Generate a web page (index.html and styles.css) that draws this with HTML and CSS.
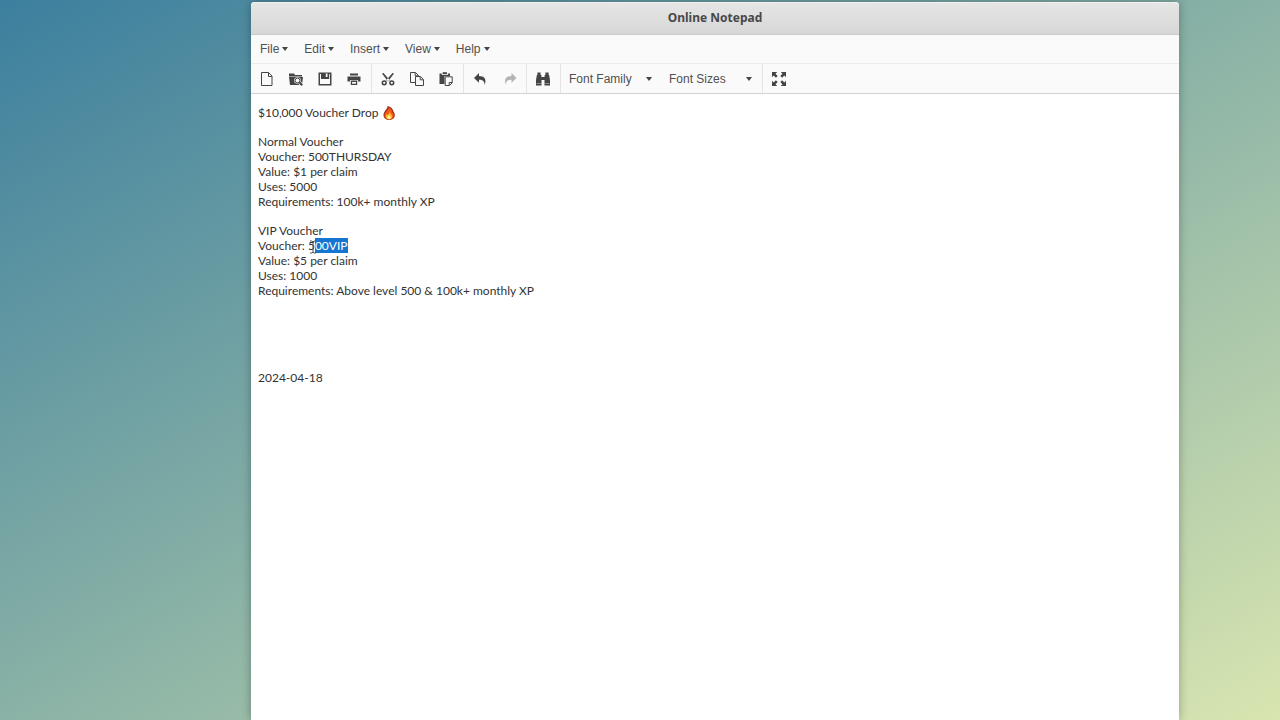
FILE: index.html
```html
<!DOCTYPE html>
<html lang="en">
<head>
<meta charset="utf-8">
<title>Online Notepad</title>
<link rel="stylesheet" href="styles.css">
</head>
<body>
<main class="window">
  <header class="titlebar"><h1 class="title">Online Notepad</h1></header>

  <nav class="menubar" aria-label="Menu">
    <button class="menu" type="button">File<span class="caret"></span></button>
    <button class="menu" type="button">Edit<span class="caret"></span></button>
    <button class="menu" type="button">Insert<span class="caret"></span></button>
    <button class="menu" type="button">View<span class="caret"></span></button>
    <button class="menu" type="button">Help<span class="caret"></span></button>
  </nav>

  <div class="toolbar" role="toolbar" aria-label="Editor tools">
    <div class="group">
      <button class="tool" type="button" aria-label="New document">
        <svg class="icon" viewBox="0 0 16 16"><path class="line" d="M2.500 1.500h7l3.500 3.500v9.500H2.500zM9.500 1.800v3.700h3.300"/></svg>
      </button>
      <button class="tool" type="button" aria-label="Open">
        <svg class="icon" viewBox="0 0 16 16"><path d="M1 2.500h5l1 1.500h7v1.500H1zM1 6h14l-1 8H2z"/><circle cx="9.500" cy="9.500" r="3.300" fill="#fafafa"/><path stroke="#fafafa" stroke-width="3.200" d="M11.500 11.500l2.800 2.800"/><circle class="line" cx="9.500" cy="9.500" r="2.400"/><path class="bold" d="M11.300 11.300l2.900 2.900"/></svg>
      </button>
      <button class="tool" type="button" aria-label="Save">
        <svg class="icon" viewBox="0 0 16 16"><path fill-rule="evenodd" d="M1.500 1.500h13v13h-13zM3 3v10h10V3h-.8v5H4V3z"/><path fill="#fafafa" d="M8.800 2.500h1.700v3.500H8.800z"/></svg>
      </button>
      <button class="tool" type="button" aria-label="Print">
        <svg class="icon" viewBox="0 0 16 16"><path d="M4 2.500h8v2H4zM1.500 5.500h13v5H12V9H4v1.500H1.500z"/><path d="M4.800 9.500h6.400V14H4.800z"/><path fill="#fafafa" d="M6 11h4v1.700H6z"/></svg>
      </button>
    </div>
    <div class="group">
      <button class="tool" type="button" aria-label="Cut">
        <svg class="icon" viewBox="0 0 16 16"><path d="M2 2.500l1.500-.5 6.300 7.200-1.800 1.400zM14 2.500l-1.500-.5-6.300 7.200 1.800 1.400z"/><circle class="cut" cx="4.200" cy="11.800" r="1.900"/><circle class="cut" cx="11.800" cy="11.800" r="1.900"/></svg>
      </button>
      <button class="tool" type="button" aria-label="Copy">
        <svg class="icon" viewBox="0 0 16 16"><path class="line" d="M6.500 11.500h-5v-10h5l3 3v1M6.200 1.700v3.100h3.100M6.500 5.500h5l3 3v6h-8zM11.200 5.700v3.100h3.100"/></svg>
      </button>
      <button class="tool" type="button" aria-label="Paste">
        <svg class="icon" viewBox="0 0 16 16"><path d="M1.500 2.500h2.300V4h6V2.500H12v2.600H6.500v8h-5z"/><path d="M4.700 1.200h4.200v2H4.700z"/><path class="line" fill="#fafafa" d="M7.200 5.800h7v6l-2.700 2.700H7.200zM14 11.500h-2.800v2.800"/></svg>
      </button>
    </div>
    <div class="group">
      <button class="tool" type="button" aria-label="Undo">
        <svg class="icon" viewBox="0 0 16 16"><path d="M7 2v3c5 0 8.200 3.200 5.500 9 .2-3.800-1.800-5.300-5.500-5.200v3L2 6.900z"/></svg>
      </button>
      <button class="tool" type="button" aria-label="Redo" disabled>
        <svg class="icon" viewBox="0 0 16 16"><path d="M10.500 2v3c-5 0-8.200 3.200-5.500 9-.2-3.800 1.800-5.300 5.500-5.200v3l5-4.900z"/></svg>
      </button>
    </div>
    <div class="group">
      <button class="tool" type="button" aria-label="Find and replace">
        <svg class="icon" viewBox="0 0 16 16"><path d="M2.400 1.500h3.200V4h.8v2h3.200V4h.8V1.500h3.200V4h.5l.9 5v5.500H9.500V9h-3v5.500H1V9l.9-5h.5z"/><path stroke="#fafafa" stroke-width=".4" d="M1.500 12.500h4.500M10 12.500h4.500"/></svg>
      </button>
    </div>
    <div class="group group-selects">
      <div class="picker">
        <select class="select" aria-label="Font family"><option>Font Family</option></select>
        <span class="caret picker-caret"></span>
      </div>
      <div class="picker">
        <select class="select" aria-label="Font size"><option>Font Sizes</option></select>
        <span class="caret picker-caret"></span>
      </div>
    </div>
    <div class="group">
      <button class="tool" type="button" aria-label="Fullscreen">
        <svg class="icon" viewBox="0 0 16 16"><path d="M1 1h5.200L4.500 2.700l2.200 2.200-1.800 1.800-2.200-2.200L1 6.200zM15 1v5.200l-1.700-1.700-2.200 2.200-1.800-1.800 2.200-2.200L9.800 1zM1 15V9.800l1.700 1.700 2.200-2.200 1.800 1.800-2.200 2.200L6.200 15zM15 15H9.800l1.700-1.700-2.200-2.200 1.800-1.800 2.200 2.200L15 9.800z"/></svg>
      </button>
    </div>
  </div>

  <div class="editor" role="textbox" aria-multiline="true" aria-label="Note" contenteditable="true" spellcheck="false">
    <p class="note">$10,000 Voucher Drop <svg class="flame" role="img" aria-label="fire" viewBox="0 0 14 14"><path fill="#a5301a" d="M5.500 0C9 .8 11 3 11.500 5.500 12.600 7 13 8.300 12.800 9.800 12.500 12.400 10.300 14 7.200 14S1.800 12.400 1.500 9.800C1.300 7.500 2.300 5.800 3.500 4.300 4.600 3 5.600 1.800 5.500 0z"/><path fill="#ee5a1c" d="M6.800 1.500c2.300 1.300 3.300 3 3.500 4.800 1.200 1.200 1.500 2.400 1.300 3.700-.3 2-2 3.300-4.400 3.300S2.900 12 2.600 10c-.2-1.900.6-3.200 1.700-4.500C5.600 4.200 6.800 3.200 6.800 1.500z"/><path fill="#ffb52b" d="M7.500 5.500c0 1.500 2.700 2.500 2.700 5 0 1.800-1.300 2.900-3.100 2.900s-3.300-1-3.300-2.800c0-1.300.6-2 1.200-2.600l.7.900C6.800 8.200 7.500 7 7.500 5.500z"/><path fill="#fff08a" d="M7.100 8.800c.2.900 1.600 1.300 1.600 2.700 0 1-.7 1.600-1.700 1.600s-1.700-.6-1.700-1.600c0-1.100 1.400-1.600 1.800-2.700z"/></svg></p>
    <p class="note">Normal Voucher<br>Voucher: 500THURSDAY<br>Value: $1 per claim<br>Uses: 5000<br>Requirements: 100k+ monthly XP</p>
    <p class="note">VIP Voucher<br>Voucher: 5<span class="selected"><svg class="cursor" aria-hidden="true" viewBox="0 0 8 14"><path d="M1 1h2l1 1 1-1h2M4 2v10M1 13h2l1-1 1 1h2"/></svg>00VIP</span><br>Value: $5 per claim<br>Uses: 1000<br>Requirements: Above level 500 &amp; 100k+ monthly XP</p>
    <p class="note date">2024-04-18</p>
  </div>
</main>
</body>
</html>
```
FILE: styles.css
```css
* {
  box-sizing: border-box;
}

body {
  margin: 0;
  min-height: 100vh;
  display: flex;
  padding: 2px 101px 0 251px;
  background: linear-gradient(to bottom right, #3c7f9e, #8ab2a6 50%, #d8e5b0);
  font-family: "Liberation Sans", Arial, sans-serif;
  color: #505050;
}

.window {
  flex: 1;
  display: flex;
  flex-direction: column;
  background: #fff;
  border-radius: 4px 4px 0 0;
  box-shadow: 0 0 10px rgba(0, 0, 0, 0.3);
}

.titlebar {
  padding: 6px 0 7px;
  border-bottom: 1px solid #cbcbcb;
  border-radius: 4px 4px 0 0;
  background: linear-gradient(#e6e6e6, #d7d7d7);
  box-shadow: inset 0 1px #f1f1f1;
}

.title {
  margin: 0;
  font: 700 12px/19px "Noto Sans", sans-serif;
  text-align: center;
  color: #484848;
}

.menubar {
  display: flex;
  gap: 2px;
  padding: 3px 2px;
  background: #fafafa;
  border-bottom: 1px solid #ececec;
}

.menu {
  display: flex;
  align-items: center;
  gap: 3px;
  padding: 0 7px;
  border: 0;
  background: none;
  font: 12px/22px "Liberation Sans", Arial, sans-serif;
  color: inherit;
}

.caret {
  border: 3px solid transparent;
  border-top: 4px solid #444;
  border-bottom: 0;
}

.toolbar {
  display: flex;
  background: #fafafa;
  border-bottom: 1px solid #d2d2d2;
}

.group {
  display: flex;
  gap: 1px;
  padding: 1px 3px 0 2px;
  border-right: 1px solid #e5e5e5;
}

.group:last-child {
  border-right: 0;
}

.group-selects {
  gap: 2px;
  padding-right: 1px;
}

.tool {
  display: flex;
  align-items: center;
  justify-content: center;
  width: 28px;
  height: 28px;
  padding: 0;
  border: 0;
  background: none;
  color: #444;
}

.tool:disabled {
  color: #b4b4b4;
}

.icon {
  width: 16px;
  height: 16px;
  fill: currentColor;
}

.line,
.bold,
.cut {
  fill: none;
  stroke: currentColor;
  stroke-width: 1;
}

.line[fill] {
  fill: #fafafa;
}

.bold {
  stroke-width: 2;
}

.cut {
  stroke-width: 1.5;
}

.picker {
  position: relative;
  display: flex;
  width: 98px;
}

.select {
  appearance: none;
  flex: 1;
  padding: 0 6px;
  border: 0;
  background: none;
  font: 12px/16px "Liberation Sans", Arial, sans-serif;
  color: inherit;
}

.picker-caret {
  position: absolute;
  top: 12px;
  right: 9px;
  pointer-events: none;
}

.editor {
  flex: 1;
  padding: 11px 7px;
  font: 12px/15px Lato, sans-serif;
  color: #333;
  outline: none;
}

.note {
  margin: 0 0 14px;
}

.date {
  margin-top: 72px;
}

.flame {
  width: 14px;
  height: 14px;
  vertical-align: -3px;
}

.selected {
  position: relative;
  background: #1675d1;
  color: #fff;
}

.cursor {
  position: absolute;
  left: -6px;
  top: 2px;
  width: 8px;
  height: 14px;
  fill: none;
  stroke: #555;
}
```
